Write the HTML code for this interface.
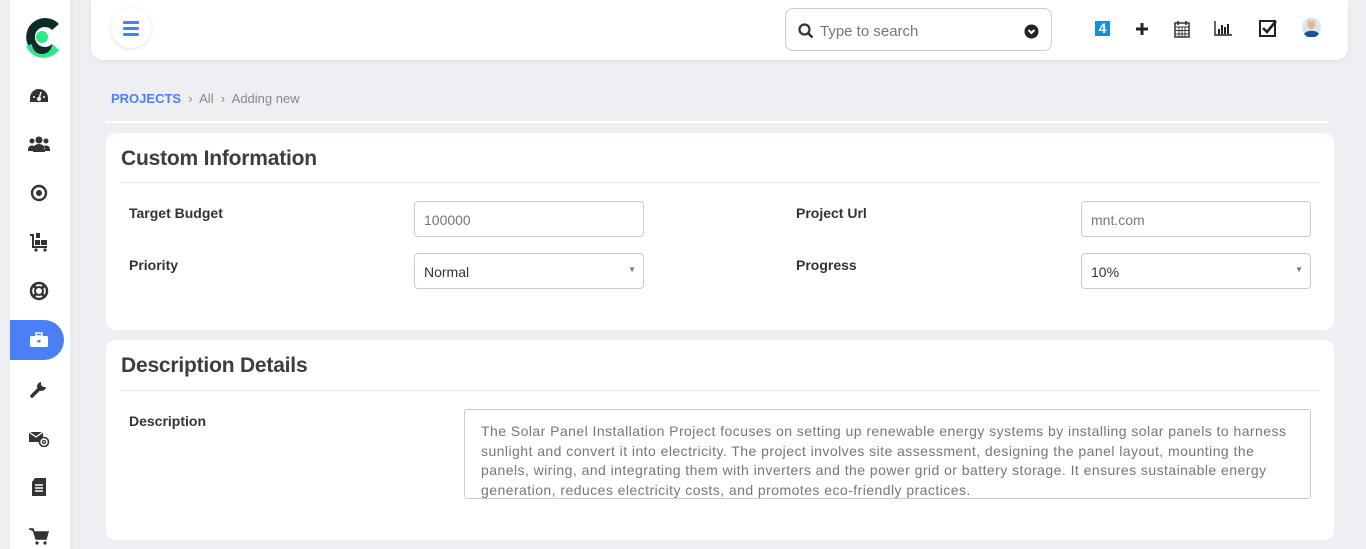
<!DOCTYPE html>
<html><head><meta charset="utf-8"><style>
*{box-sizing:border-box;margin:0;padding:0}
body{width:1366px;height:549px;overflow:hidden;background:#eeeff2;font-family:"Liberation Sans",sans-serif;position:relative;color:#333}
.side{position:absolute;left:10px;top:0;width:60px;height:549px;background:#fff;box-shadow:2px 0 4px rgba(0,0,0,.04)}
.ic{position:absolute;left:18px;width:22px;height:22px;display:flex;align-items:center;justify-content:center}
.active{position:absolute;left:0;top:320px;width:54px;height:40px;background:#4a7ff5;border-radius:0 20px 20px 0}
.hdr{position:absolute;left:91px;top:0;width:1257px;height:60px;background:#fff;border-radius:0 0 12px 12px;box-shadow:0 2px 6px rgba(0,0,0,.05)}
.burger{position:absolute;left:20px;top:8px;width:40px;height:40px;border-radius:50%;background:#fff;box-shadow:0 1px 5px rgba(0,0,0,.12)}
.burger i{position:absolute;left:12px;width:16px;height:2.5px;background:#4a7ff5;border-radius:1px}
.search{position:absolute;left:694px;top:8px;width:267px;height:43px;border:1px solid #ccc;border-radius:8px}
.search span{position:absolute;left:34px;top:14px;font-size:15px;color:#777}
.crumb{position:absolute;left:111px;top:91px;font-size:13px;color:#888}
.crumb b{color:#4a7ff5;font-weight:bold;font-size:13px}
.line{position:absolute;left:105px;top:121px;width:1224px;height:2px;background:#fff}
.card{position:absolute;left:106px;width:1228px;background:#fff;border-radius:10px}
.card h2{position:absolute;left:15px;font-size:21px;font-weight:bold;color:#3a3f3a;letter-spacing:-.2px}
.card .sep{position:absolute;left:14px;right:14px;height:1px;background:#e8e8e8}
.lbl{position:absolute;font-size:14px;font-weight:bold;color:#333}
.inp{position:absolute;width:230px;height:36px;border:1px solid #ccc;border-radius:4px;font-size:14px;padding:10px 9px;color:#333}
.inp.g{color:#777}
.inp .ar{position:absolute;right:7px;top:11px;font-size:8px;color:#777}
.ta{position:absolute;left:358px;top:69px;width:847px;height:90px;border:1px solid #ccc;border-radius:3px;padding:12px 16px;font-size:14px;line-height:19.5px;color:#777;white-space:nowrap;letter-spacing:.45px;overflow:hidden}
</style></head><body>
<div class="side">
 <svg style="position:absolute;left:12px;top:16px" width="38" height="42" viewBox="0 0 38 42"><path d="M37 8 A19 19 0 1 0 37 34 L30 28 A10 10 0 1 1 30 14 Z" fill="#0e2a2b"/><path d="M4 30 A19 19 0 0 0 37 34 L30 28 A10 10 0 0 1 10 28 Z" fill="#2ee88a"/><circle cx="20" cy="21" r="6" fill="#2ee88a"/></svg>
 <div class="ic" style="top:85px"><svg width="20" height="16" viewBox="0 0 20 16"><path d="M10 1A9 9 0 0 0 1 10v4h18v-4A9 9 0 0 0 10 1z" fill="#333"/><circle cx="10" cy="11" r="2" fill="#fff"/><path d="M10 11 12 4" stroke="#fff" stroke-width="1.5"/><circle cx="5" cy="9" r="1" fill="#fff"/><circle cx="15" cy="9" r="1" fill="#fff"/></svg></div>
 <div class="ic" style="top:133px"><svg width="22" height="18" viewBox="0 0 22 18"><circle cx="11" cy="5" r="3.5" fill="#333"/><circle cx="4" cy="6" r="2.5" fill="#333"/><circle cx="18" cy="6" r="2.5" fill="#333"/><path d="M5 17v-3a6 5 0 0 1 12 0v3z M0 14a4 4 0 0 1 6-3l-1 5H0z M22 14a4 4 0 0 0-6-3l1 5h5z" fill="#333"/></svg></div>
 <div class="ic" style="top:182px"><svg width="18" height="18"><circle cx="9" cy="9" r="7" fill="none" stroke="#333" stroke-width="2.4"/><circle cx="9" cy="9" r="3" fill="#333"/></svg></div>
 <div class="ic" style="top:231px"><svg width="20" height="20"><path d="M1 3h3v12h14" fill="none" stroke="#333" stroke-width="2"/><rect x="7" y="1" width="4" height="5" fill="#333"/><rect x="6" y="8" width="5" height="5" fill="#333"/><rect x="12" y="8" width="6" height="5" fill="#333"/><circle cx="7" cy="18" r="1.6" fill="#333"/><circle cx="16" cy="18" r="1.6" fill="#333"/></svg></div>
 <div class="ic" style="top:280px"><svg width="20" height="20"><circle cx="10" cy="10" r="8" fill="none" stroke="#333" stroke-width="2.5"/><circle cx="10" cy="10" r="4" fill="none" stroke="#333" stroke-width="2"/><path d="M4 4l3 3M16 4l-3 3M4 16l3-3M16 16l-3-3" stroke="#333" stroke-width="3"/></svg></div>
 <div class="active"></div>
 <div class="ic" style="top:329px"><svg width="20" height="16"><rect x="7" y="1" width="6" height="3" fill="none" stroke="#fff" stroke-width="1.5"/><rect x="1" y="4" width="18" height="11" rx="1.5" fill="#fff"/><rect x="8.5" y="8" width="3" height="2.5" fill="#4a7ff5"/></svg></div>
 <div class="ic" style="top:378px"><svg width="18" height="18"><path d="M2 16l8-8" stroke="#333" stroke-width="3.5" stroke-linecap="round"/><path d="M11 2a4.5 4.5 0 1 0 5 5l-3 0-2-2z" fill="#333"/></svg></div>
 <div class="ic" style="top:427px"><svg width="22" height="18"><path d="M1 3h14v10H1z" fill="#333"/><path d="M1 3l7 5 7-5" stroke="#fff" stroke-width="1.3" fill="none"/><circle cx="16" cy="13" r="4.5" fill="#fff" stroke="#333" stroke-width="1.6"/><circle cx="16" cy="13" r="1.5" fill="none" stroke="#333" stroke-width="1.2"/></svg></div>
 <div class="ic" style="top:476px"><svg width="16" height="20"><path d="M4 1h11v18H1V5z" fill="#333"/><path d="M4 8h8M4 11h8M4 14h8" stroke="#fff" stroke-width="1.4"/></svg></div>
 <div class="ic" style="top:525px"><svg width="20" height="18"><path d="M0 2h4l3 10h10l2-7H5" fill="#333" stroke="#333" stroke-width="1.5"/><circle cx="8" cy="16" r="1.6" fill="#333"/><circle cx="16" cy="16" r="1.6" fill="#333"/></svg></div>
</div>
<div class="hdr">
 <div class="burger"><i style="top:13px"></i><i style="top:19px"></i><i style="top:25px"></i></div>
 <div class="search">
  <svg style="position:absolute;left:12px;top:14px" width="16" height="16"><circle cx="6.5" cy="6.5" r="5" fill="none" stroke="#333" stroke-width="2.2"/><path d="M10 10l4.5 4.5" stroke="#333" stroke-width="2.5"/></svg>
  <span>Type to search</span>
  <svg style="position:absolute;left:238px;top:15px" width="15" height="15"><circle cx="7.5" cy="7.5" r="7" fill="#222"/><path d="M4.5 6l3 3 3-3" stroke="#fff" stroke-width="2" fill="none"/></svg>
 </div>
 <div style="position:absolute;left:1004px;top:21px;width:15px;height:15px;background:#1a8fd6;color:#fff;font-weight:bold;font-size:14px;line-height:15px;text-align:center">4</div>
 <svg style="position:absolute;left:1044px;top:22px" width="14" height="14"><path d="M7 1v12M1 7h12" stroke="#222" stroke-width="3"/></svg>
 <svg style="position:absolute;left:1083px;top:20px" width="16" height="18"><rect x="1" y="3" width="14" height="14" fill="none" stroke="#333" stroke-width="1.5"/><path d="M1 7h14M5 7v10M8 7v10M11 7v10M1 10.5h14M1 14h14" stroke="#333" stroke-width=".9"/><path d="M4 1v4M12 1v4" stroke="#333" stroke-width="1.6"/></svg>
 <svg style="position:absolute;left:1123px;top:20px" width="19" height="16"><path d="M1 1v14h17" stroke="#222" stroke-width="1.4" fill="none"/><path d="M5 9v5M8 5v9M11 7v7M14 4v10" stroke="#222" stroke-width="2"/></svg>
 <svg style="position:absolute;left:1168px;top:19px" width="19" height="18"><rect x="1" y="2" width="15" height="15" fill="none" stroke="#222" stroke-width="2"/><path d="M4 9l4 4 9-11" stroke="#222" stroke-width="2.6" fill="none"/></svg>
 <svg style="position:absolute;left:1211px;top:17px" width="19" height="20"><circle cx="9.5" cy="10" r="9.5" fill="#dfe5ea"/><path d="M2 17a8 5 0 0 1 15 0 9.5 9.5 0 0 1-15 0z" fill="#1e4f9c"/><circle cx="9.5" cy="8" r="3.8" fill="#e8b48a"/><path d="M5.5 7a4 4 0 0 1 8 0c0-3-1.5-4-4-4s-4 1-4 4z" fill="#222"/></svg>
</div>
<div class="crumb"><b>PROJECTS</b> &nbsp;›&nbsp; All &nbsp;›&nbsp; Adding new</div>
<div class="line"></div>
<div class="card" style="top:133px;height:197px">
 <h2 style="top:14px">Custom Information</h2>
 <div class="sep" style="top:49px"></div>
 <div class="lbl" style="left:23px;top:72px">Target Budget</div>
 <div class="inp g" style="left:308px;top:68px">100000</div>
 <div class="lbl" style="left:23px;top:124px">Priority</div>
 <div class="inp" style="left:308px;top:120px">Normal<span class="ar">▼</span></div>
 <div class="lbl" style="left:690px;top:72px">Project Url</div>
 <div class="inp g" style="left:975px;top:68px">mnt.com</div>
 <div class="lbl" style="left:690px;top:124px">Progress</div>
 <div class="inp" style="left:975px;top:120px">10%<span class="ar">▼</span></div>
</div>
<div class="card" style="top:340px;height:200px">
 <h2 style="top:14px">Description Details</h2>
 <div class="sep" style="top:50px"></div>
 <div class="lbl" style="left:23px;top:73px">Description</div>
 <div class="ta">The Solar Panel Installation Project focuses on setting up renewable energy systems by installing solar panels to harness<br>sunlight and convert it into electricity. The project involves site assessment, designing the panel layout, mounting the<br>panels, wiring, and integrating them with inverters and the power grid or battery storage. It ensures sustainable energy<br>generation, reduces electricity costs, and promotes eco-friendly practices.</div>
</div>
</body></html>
